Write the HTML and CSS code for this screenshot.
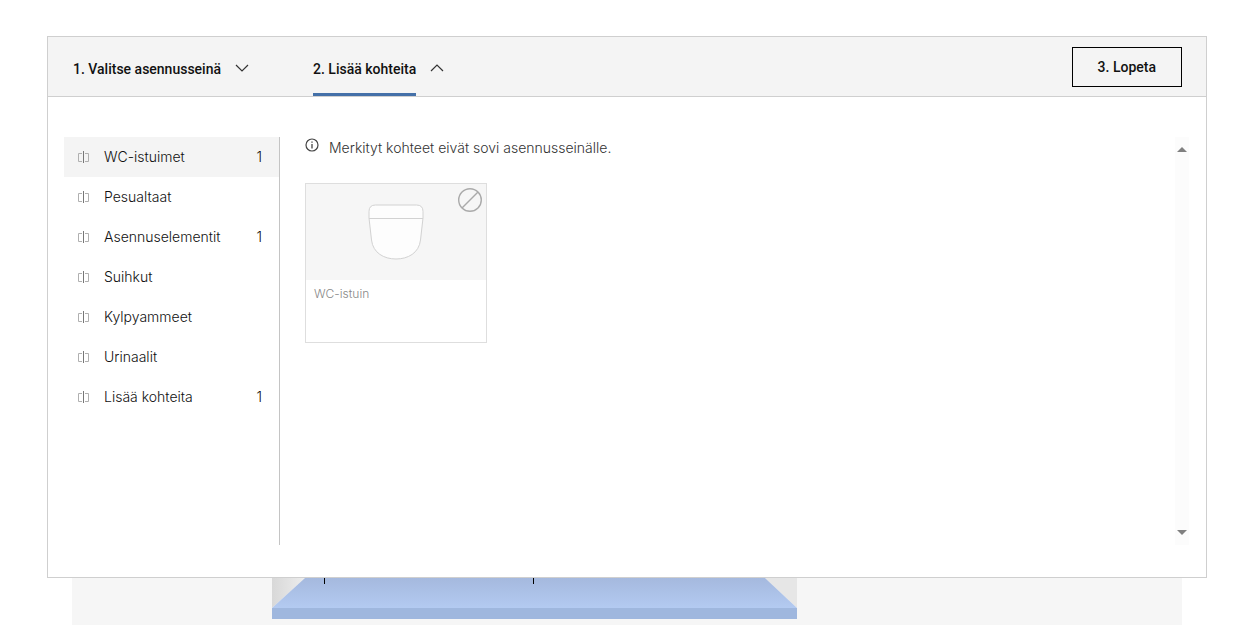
FILE: index.html
```html
<!DOCTYPE html>
<html lang="fi">

<head>
    <meta charset="utf-8">
    <meta name="viewport" content="width=device-width, initial-scale=1">
    <title>Lisää kohteita</title>
    <link rel="stylesheet" href="styles.css">
</head>

<body>
    <svg class="defs" aria-hidden="true">
        <symbol id="icon-item" viewBox="0 0 12 12">
            <path d="M4 2.5H.5v8H4M7 2.5h3.500v8H7" stroke="#b0b0b0"/>
            <path d="M5.500 0v12" stroke="#777"/>
        </symbol>
    </svg>

    <main class="panel">
        <nav class="steps">
            <button class="step" type="button">
                <span class="step-label">1. Valitse asennusseinä</span>
                <svg class="chevron" viewBox="0 0 14 8"><path d="M1 1l6 6 6-6"/></svg>
            </button>
            <button class="step active" type="button">
                <span class="step-label">2. Lisää kohteita</span>
                <svg class="chevron" viewBox="0 0 14 8"><path d="M1 7l6-6 6 6"/></svg>
            </button>
            <button class="finish" type="button">3. Lopeta</button>
        </nav>

        <div class="content">
            <div class="categories">
                <button class="category selected" type="button">
                    <svg class="item-icon"><use href="#icon-item"/></svg>
                    <span>WC-istuimet</span>
                    <span class="count">1</span>
                </button>
                <button class="category" type="button">
                    <svg class="item-icon"><use href="#icon-item"/></svg>
                    <span>Pesualtaat</span>
                </button>
                <button class="category" type="button">
                    <svg class="item-icon"><use href="#icon-item"/></svg>
                    <span>Asennuselementit</span>
                    <span class="count">1</span>
                </button>
                <button class="category" type="button">
                    <svg class="item-icon"><use href="#icon-item"/></svg>
                    <span>Suihkut</span>
                </button>
                <button class="category" type="button">
                    <svg class="item-icon"><use href="#icon-item"/></svg>
                    <span>Kylpyammeet</span>
                </button>
                <button class="category" type="button">
                    <svg class="item-icon"><use href="#icon-item"/></svg>
                    <span>Urinaalit</span>
                </button>
                <button class="category" type="button">
                    <svg class="item-icon"><use href="#icon-item"/></svg>
                    <span>Lisää kohteita</span>
                    <span class="count">1</span>
                </button>
            </div>

            <section class="items">
                <p class="notice">
                    <svg class="info-icon" viewBox="0 0 14 14">
                        <circle cx="7" cy="7" r="6" fill="none" stroke="#444" stroke-width="1.2"/>
                        <path d="M7 3.5v1.3M7 6v4.5" stroke="#444" stroke-width="1.3"/>
                    </svg>
                    Merkityt kohteet eivät sovi asennusseinälle.
                </p>
                <button class="card" type="button">
                    <span class="card-image">
                        <svg class="toilet" viewBox="0 0 56 56">
                            <path d="M1 7.500Q1 1 7.500 1H48.500Q55 1 55 7.500V14L52.500 36C51 49 40 55 28 55S5 49 3.500 36L1 14Z"/>
                            <path d="M1 14.500H55"/>
                        </svg>
                        <svg class="blocked" viewBox="0 0 26 26">
                            <circle cx="13" cy="13" r="11.300"/>
                            <path d="M5 21L21 5"/>
                        </svg>
                    </span>
                    <span class="card-title">WC-istuin</span>
                </button>
            </section>

            <div class="scrollbar">
                <button class="scroll-button" type="button" aria-label="Ylös">
                    <svg viewBox="0 0 10 5"><path d="M0 5l5-5 5 5z"/></svg>
                </button>
                <button class="scroll-button" type="button" aria-label="Alas">
                    <svg viewBox="0 0 10 5"><path d="M0 0l5 5 5-5z"/></svg>
                </button>
            </div>
        </div>
    </main>

    <div class="scene">
        <svg class="room" viewBox="0 0 525 41">
            <defs>
                <linearGradient id="floor" x2="0" y2="1">
                    <stop stop-color="#a5b9de"/>
                    <stop offset="1" stop-color="#b3caf1"/>
                </linearGradient>
                <linearGradient id="wall">
                    <stop stop-color="#d8d8d8"/>
                    <stop offset="1" stop-color="#ededed"/>
                </linearGradient>
            </defs>
            <path d="M0 0H33L0 30Z" fill="url(#wall)"/>
            <path d="M493 0h32v30z" fill="#e6e6e6"/>
            <path d="M33 0H493L525 30H0Z" fill="url(#floor)"/>
            <path d="M0 30H525V41H0Z" fill="#9fb7de"/>
            <path d="M52.500 0V6M261.500 0V6" stroke="#000"/>
        </svg>
    </div>
</body>

</html>
```
FILE: styles.css
```css
:root {
    --text-color: #111;
    --grey-bg: #f4f4f4;
    --border-color: #cfcfcf;
    --primary-color: #4470a8;
}

* {
    box-sizing: border-box;
}

body {
    display: flex;
    flex-direction: column;
    min-height: 100vh;
    margin: 0;
    padding: 36px 37px 0 47px;
    background-color: #fff;
    color: var(--text-color);
    font-family: Inter, "Liberation Sans", sans-serif;
    font-size: 14px;
    font-weight: 300;
    line-height: 20px;
}

button {
    padding: 0;
    border: 0;
    background: none;
    color: inherit;
    font: inherit;
    text-align: left;
    cursor: pointer;
}

svg {
    display: block;
    flex-shrink: 0;
    fill: none;
}

.defs {
    position: absolute;
    width: 0;
    height: 0;
}

.panel {
    background-color: #fff;
    border: 1px solid var(--border-color);
}

.steps {
    display: flex;
    align-items: center;
    gap: 64px;
    height: 60px;
    padding: 0 24px 0 25px;
    background-color: var(--grey-bg);
    border-bottom: 1px solid var(--border-color);
    font-family: Roboto, "Liberation Sans", sans-serif;
    font-weight: 500;
}

.step {
    display: flex;
    align-items: center;
    gap: 14px;
    height: 100%;
}

.step-label {
    display: flex;
    align-items: center;
    height: 100%;
    padding-top: 8px;
    border-bottom: 3px solid transparent;
}

.step.active .step-label {
    border-color: var(--primary-color);
}

.chevron {
    width: 14px;
    height: 8px;
    margin-top: 2px;
    stroke: #333;
    stroke-width: 1.2;
}

.finish {
    height: 40px;
    margin-left: auto;
    padding: 0 25px;
    border: 1px solid #000;
}

.content {
    display: flex;
    min-height: 480px;
    padding: 40px 17px 32px 16px;
}

.categories {
    width: 216px;
    border-right: 1px solid #c4c4c4;
}

.category {
    display: flex;
    align-items: center;
    width: 100%;
    height: 40px;
    padding: 0 17px 0 14px;
    gap: 14px;
}

.category.selected {
    background-color: var(--grey-bg);
}

.item-icon {
    width: 12px;
    height: 12px;
}

.count {
    margin-left: auto;
}

.items {
    flex: 1;
    padding-left: 25px;
}

.notice {
    display: flex;
    gap: 10px;
    margin: 0 0 25px;
    color: #333;
    line-height: 21px;
}

.info-icon {
    width: 14px;
    height: 14px;
    margin-top: 1px;
}

.card {
    display: flex;
    flex-direction: column;
    width: 182px;
    height: 160px;
    border: 1px solid #dedede;
}

.card-image {
    position: relative;
    display: flex;
    justify-content: center;
    align-items: center;
    width: 100%;
    height: 96px;
    background-color: #f6f6f6;
}

.toilet {
    width: 56px;
    height: 56px;
    fill: #fdfdfd;
    stroke: #d2d2d2;
}

.blocked {
    position: absolute;
    top: 3px;
    right: 3px;
    width: 26px;
    height: 26px;
    stroke: #aaa;
    stroke-width: 1.4;
}

.card-title {
    padding: 4px 8px;
    color: #888;
    font-size: 12px;
}

.scrollbar {
    display: flex;
    flex-direction: column;
    justify-content: space-between;
    width: 14px;
    background-color: #fcfcfc;
}

.scroll-button {
    display: flex;
    justify-content: center;
    align-items: center;
    height: 25px;
}

.scroll-button svg {
    width: 10px;
    height: 5px;
    fill: #808080;
}

.scene {
    flex: 1;
    margin: 0 25px;
    padding-left: 200px;
    background-color: #f6f6f6;
}

.room {
    width: 525px;
    height: 41px;
}
```
